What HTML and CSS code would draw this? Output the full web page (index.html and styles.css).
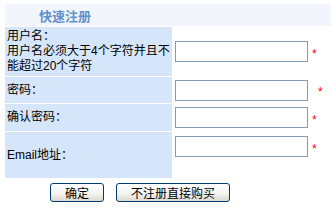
FILE: index.html
```html
<!DOCTYPE html>
<html lang="zh-CN">
<head>
  <meta charset="UTF-8" />
  <meta name="viewport" content="width=device-width, initial-scale=1.0"/>
  <title>快速注册</title>
  <link rel="stylesheet" href="styles.css">
</head>
<body>
  <form class="reg-form" onsubmit="return false">
    <table class="reg-table">
      <tr class="head-row">
        <td colspan="2" class="reg-title">快速注册</td>
      </tr>
      <tr class="row-user">
        <td class="label">
          <div class="label-text">用户名：<br>用户名必须大于4个字符并且不能超过20个字符</div>
        </td>
        <td class="field">
          <input type="text" class="txt" name="username"><span class="req">*</span>
        </td>
      </tr>
      <tr class="row-pwd">
        <td class="label">密码：</td>
        <td class="field">
          <input type="password" class="txt" name="password"><span class="req req-wide">*</span>
        </td>
      </tr>
      <tr class="row-pwd2">
        <td class="label">确认密码：</td>
        <td class="field">
          <input type="password" class="txt" name="password2"><span class="req">*</span>
        </td>
      </tr>
      <tr class="row-email">
        <td class="label">Email地址：</td>
        <td class="field field-top">
          <input type="text" class="txt" name="email"><span class="req">*</span>
        </td>
      </tr>
    </table>

    <div class="button-group">
      <button class="btn btn-ok" type="submit">确定</button>
      <button class="btn btn-buy" type="button">不注册直接购买</button>
    </div>
  </form>
</body>
</html>
```

FILE: styles.css
```css
* {
  box-sizing: border-box;
}

body {
  margin: 0;
  padding: 0;
  background: #fff;
  font-family: "Liberation Sans", "Noto Sans CJK SC", sans-serif;
  font-size: 12px;
  color: #000;
}

.reg-form {
  margin: 0;
}

.reg-table {
  width: 328px;
  margin: 3px 0 0 4px;
  border-collapse: separate;
  border-spacing: 1px;
  background: #fff;
}

.reg-table td {
  padding: 0;
}

.reg-title {
  height: 22px;
  padding-left: 34px !important;
  background: #f2f6fc;
  color: #6391cc;
  font-weight: bold;
  font-size: 13px;
  vertical-align: middle;
}

.label {
  width: 167px;
  padding-left: 2px !important;
  background: #d5e6fb;
  vertical-align: middle;
  line-height: 15px;
}

.label-text {
  padding-bottom: 1px;
}

.row-user td { height: 49px; }
.row-pwd td { height: 26px; }
.row-pwd2 td { height: 27px; }
.row-email td { height: 46px; }

.field {
  padding-left: 2px !important;
  background: #fff;
  vertical-align: middle;
  white-space: nowrap;
}

.field-top {
  vertical-align: top;
  padding-top: 4px !important;
}

.txt {
  width: 133px;
  height: 21px;
  margin: 0;
  padding: 1px 2px;
  border: 1px solid #7f9db9;
  background: #fff;
  vertical-align: middle;
  font-size: 12px;
}

.req {
  display: inline-block;
  margin-left: 4px;
  color: #ff0000;
  font-size: 12px;
  line-height: 12px;
  vertical-align: middle;
  position: relative;
  top: 2px;
}

.req-wide {
  margin-left: 10px;
}

.button-group {
  display: flex;
  gap: 12px;
  margin-top: 4px;
  padding-left: 50px;
}

.btn {
  height: 19px;
  padding: 0 14px;
  border: 1px solid #003c74;
  border-radius: 3px;
  background: linear-gradient(#ffffff, #f4f4f0 55%, #dcd8ce);
  font-family: "Noto Sans CJK SC", sans-serif;
  font-size: 12px;
  line-height: 17px;
  color: #000;
  cursor: pointer;
}
```
